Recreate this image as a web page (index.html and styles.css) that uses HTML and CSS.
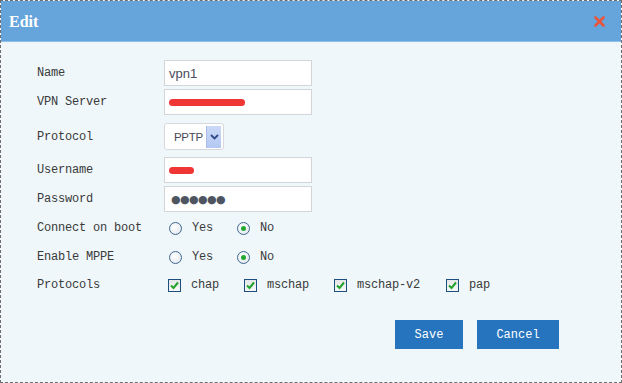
FILE: index.html
```html
<!DOCTYPE html>
<html lang="en">
<head>
    <meta charset="UTF-8">
    <title>Edit VPN</title>
    <link rel="stylesheet" href="styles.css">
</head>
<body>
    <div class="dialog">
        <div class="header">
            <span class="title">Edit</span>
            <svg class="close" width="11" height="11" viewBox="0 0 11 11">
                <path d="M1.5 1.5 L9.5 9.5 M9.5 1.5 L1.5 9.5" stroke="#e9553c" stroke-width="2.6" stroke-linecap="round"/>
            </svg>
        </div>

        <div class="form">
            <div class="row r-name">
                <label class="label">Name</label>
                <div class="input"><span class="text">vpn1</span></div>
            </div>
            <div class="row r-vpn">
                <label class="label">VPN Server</label>
                <div class="input"><span class="scribble wide"></span></div>
            </div>
            <div class="row r-proto">
                <label class="label">Protocol</label>
                <div class="select">
                    <span class="text small">PPTP</span>
                    <span class="arrow">
                        <svg width="9" height="6" viewBox="0 0 9 6"><path d="M1 1 L4.5 4.5 L8 1" fill="none" stroke="#2c4a86" stroke-width="1.8"/></svg>
                    </span>
                </div>
            </div>
            <div class="row r-user">
                <label class="label">Username</label>
                <div class="input"><span class="scribble short"></span></div>
            </div>
            <div class="row r-pass">
                <label class="label">Password</label>
                <div class="input"><span class="dots">●●●●●●</span></div>
            </div>
            <div class="row r-boot">
                <label class="label">Connect on boot</label>
                <span class="radio"></span><span class="opt">Yes</span>
                <span class="radio on"></span><span class="opt">No</span>
            </div>
            <div class="row r-mppe">
                <label class="label">Enable MPPE</label>
                <span class="radio"></span><span class="opt">Yes</span>
                <span class="radio on"></span><span class="opt">No</span>
            </div>
            <div class="row r-protos">
                <label class="label">Protocols</label>
                <span class="check"><svg width="11" height="11" viewBox="0 0 11 11"><path d="M2 5.5 L4.5 8 L9 2.5" fill="none" stroke="#22a32b" stroke-width="2"/></svg></span><span class="opt c1">chap</span>
                <span class="check"><svg width="11" height="11" viewBox="0 0 11 11"><path d="M2 5.5 L4.5 8 L9 2.5" fill="none" stroke="#22a32b" stroke-width="2"/></svg></span><span class="opt c2">mschap</span>
                <span class="check"><svg width="11" height="11" viewBox="0 0 11 11"><path d="M2 5.5 L4.5 8 L9 2.5" fill="none" stroke="#22a32b" stroke-width="2"/></svg></span><span class="opt c3">mschap-v2</span>
                <span class="check"><svg width="11" height="11" viewBox="0 0 11 11"><path d="M2 5.5 L4.5 8 L9 2.5" fill="none" stroke="#22a32b" stroke-width="2"/></svg></span><span class="opt">pap</span>
            </div>
            <div class="buttons">
                <button class="button">Save</button>
                <button class="button cancel">Cancel</button>
            </div>
        </div>
    </div>
</body>
</html>
```

FILE: styles.css
```css
body {
    margin: 0;
    font-family: "Liberation Mono", monospace;
}
.dialog {
    width: 622px;
    height: 383px;
    box-sizing: border-box;
    border: 1px dashed #6e6e6e;
    background: #eff7fb;
}
.header {
    height: 40px;
    background: #66a4dc;
    border-bottom: 1px solid #8cc1ee;
    display: flex;
    align-items: center;
    justify-content: space-between;
    padding: 0 16px 0 8px;
}
.title {
    font-family: "Liberation Serif", serif;
    font-weight: bold;
    font-size: 16px;
    color: #fff;
    margin-top: 1px;
}
.close {
    margin-top: 1px;
}
.form {
    padding: 18px 0 0 36px;
}
.row {
    display: flex;
    align-items: center;
    height: 26px;
}
.label {
    width: 127px;
    font-size: 12px;
    letter-spacing: -0.2px;
    color: #3a3a3a;
}
.r-vpn { margin-top: 3px; }
.r-proto { margin-top: 8px; height: 27px; }
.r-user { margin-top: 7px; }
.r-pass { margin-top: 3px; }
.r-boot { margin-top: 4px; height: 24px; }
.r-mppe { margin-top: 5px; height: 24px; }
.r-protos { margin-top: 4px; height: 24px; }
.input {
    width: 148px;
    height: 26px;
    box-sizing: border-box;
    border: 1px solid #d3d6d9;
    background: #fff;
    display: flex;
    align-items: center;
    padding-left: 4px;
}
.text {
    font-family: "Liberation Sans", sans-serif;
    font-size: 13px;
    color: #4a4a5a;
}
.text.small {
    font-size: 11.5px;
    letter-spacing: -0.3px;
}
.scribble {
    display: block;
    height: 7px;
    border-radius: 4px;
    background: #f03535;
}
.scribble.wide { width: 76px; margin-top: 1px; }
.scribble.short { width: 25px; }
.dots {
    font-family: "DejaVu Sans", sans-serif;
    font-size: 11px;
    letter-spacing: -0.6px;
    color: #4f5560;
    padding-left: 2px;
}
.select {
    width: 60px;
    height: 27px;
    box-sizing: border-box;
    border: 1px solid #d6d8db;
    border-radius: 3px;
    background: #fff;
    display: flex;
    align-items: center;
    justify-content: space-between;
    padding: 2px 2px 2px 9px;
}
.arrow {
    width: 14px;
    height: 22px;
    background: linear-gradient(#cbd9f7, #b4c8f2);
    border-left: 1px solid #a9bde8;
    display: flex;
    align-items: center;
    justify-content: center;
}
.radio {
    width: 11px;
    height: 11px;
    border: 1px solid #3f6790;
    border-radius: 50%;
    background: radial-gradient(circle at 40% 40%, #ffffff, #dde3ea);
    margin-left: 5px;
    display: flex;
    align-items: center;
    justify-content: center;
}
.radio.on::after {
    content: "";
    width: 5px;
    height: 5px;
    border-radius: 50%;
    background: #22a830;
}
.opt {
    font-size: 12px;
    letter-spacing: -0.2px;
    color: #3a3a3a;
    margin-left: 10px;
    width: 40px;
}
.check {
    width: 11px;
    height: 11px;
    border: 1px solid #1d4f7e;
    background: linear-gradient(#e4e6e8, #f6f7f8);
    margin-left: 4px;
    display: flex;
    align-items: center;
    justify-content: center;
}
.check + .opt {
    margin-left: 10px;
}
.opt.c1 { width: 49px; }
.opt.c2 { width: 63px; }
.opt.c3 { width: 85px; }
.buttons {
    display: flex;
    gap: 14px;
    margin: 23px 0 0 358px;
}
.button {
    background: #2673be;
    color: #fff;
    border: none;
    height: 29px;
    width: 68px;
    font-family: "Liberation Mono", monospace;
    font-size: 12px;
    padding: 0;
}
.button.cancel {
    width: 82px;
}
```
